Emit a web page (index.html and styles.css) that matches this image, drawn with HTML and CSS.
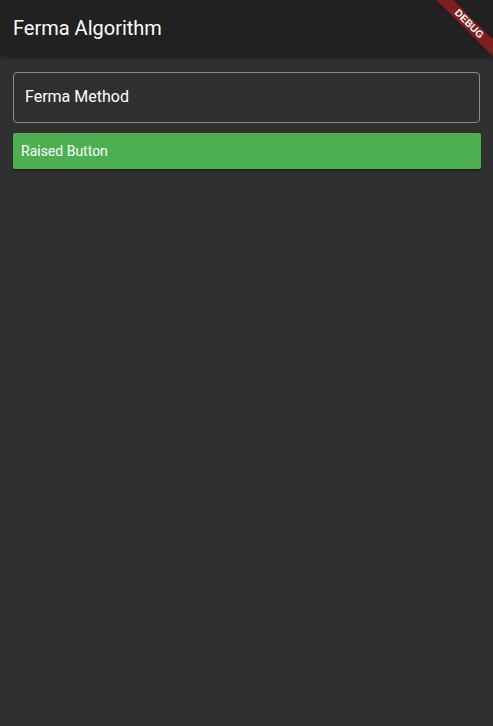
FILE: index.html
```html
<!DOCTYPE html>
<html>
<head>
<meta charset="utf-8">
<link rel="stylesheet" href="styles.css">
</head>
<body>
<header class="appbar">
  <h1 class="title">Ferma Algorithm</h1>
</header>
<main class="content">
  <div class="field">Ferma Method</div>
  <button class="raised">Raised Button</button>
</main>
<div class="banner">DEBUG</div>
</body>
</html>
```
FILE: styles.css
```css
html, body {
  margin: 0;
  padding: 0;
  height: 100%;
  overflow: hidden;
}
body {
  background: #303030;
  font-family: Roboto, "Noto Sans", sans-serif;
  color: #fff;
}
.appbar {
  height: 56px;
  background: #212121;
  display: flex;
  align-items: center;
  padding: 0 13px;
  box-shadow: 0 2px 4px rgba(0,0,0,0.35);
  position: relative;
  z-index: 1;
}
.title {
  margin: 0;
  font-size: 20px;
  font-weight: 400;
}
.content {
  padding: 16px 12px;
  display: flex;
  flex-direction: column;
  gap: 10px;
}
.field {
  border: 1px solid #8c8c8c;
  border-radius: 4px;
  box-sizing: border-box;
  height: 51px;
  display: flex;
  align-items: center;
  padding: 0 11px 2px;
  font-size: 16px;
  margin: 0 1px;
}
.raised {
  height: 36px;
  margin: 0 0 0 1px;
  background: #4caf50;
  border: none;
  border-radius: 2px;
  color: #fff;
  font-family: Roboto, "Noto Sans", sans-serif;
  font-size: 14px;
  font-weight: 400;
  text-align: left;
  padding: 0 8px;
  box-shadow: 0 2px 2px rgba(0,0,0,0.3);
}
.banner {
  position: absolute;
  z-index: 10;
  top: 18px;
  left: 429px;
  width: 80px;
  height: 12px;
  transform: rotate(45deg);
  background: rgba(183, 28, 28, 0.63);
  color: #fff;
  font-family: "Liberation Sans", sans-serif;
  font-weight: 700;
  font-size: 10px;
  line-height: 12px;
  text-align: center;
  box-shadow: 0 0 2px rgba(0,0,0,0.3);
}
```
